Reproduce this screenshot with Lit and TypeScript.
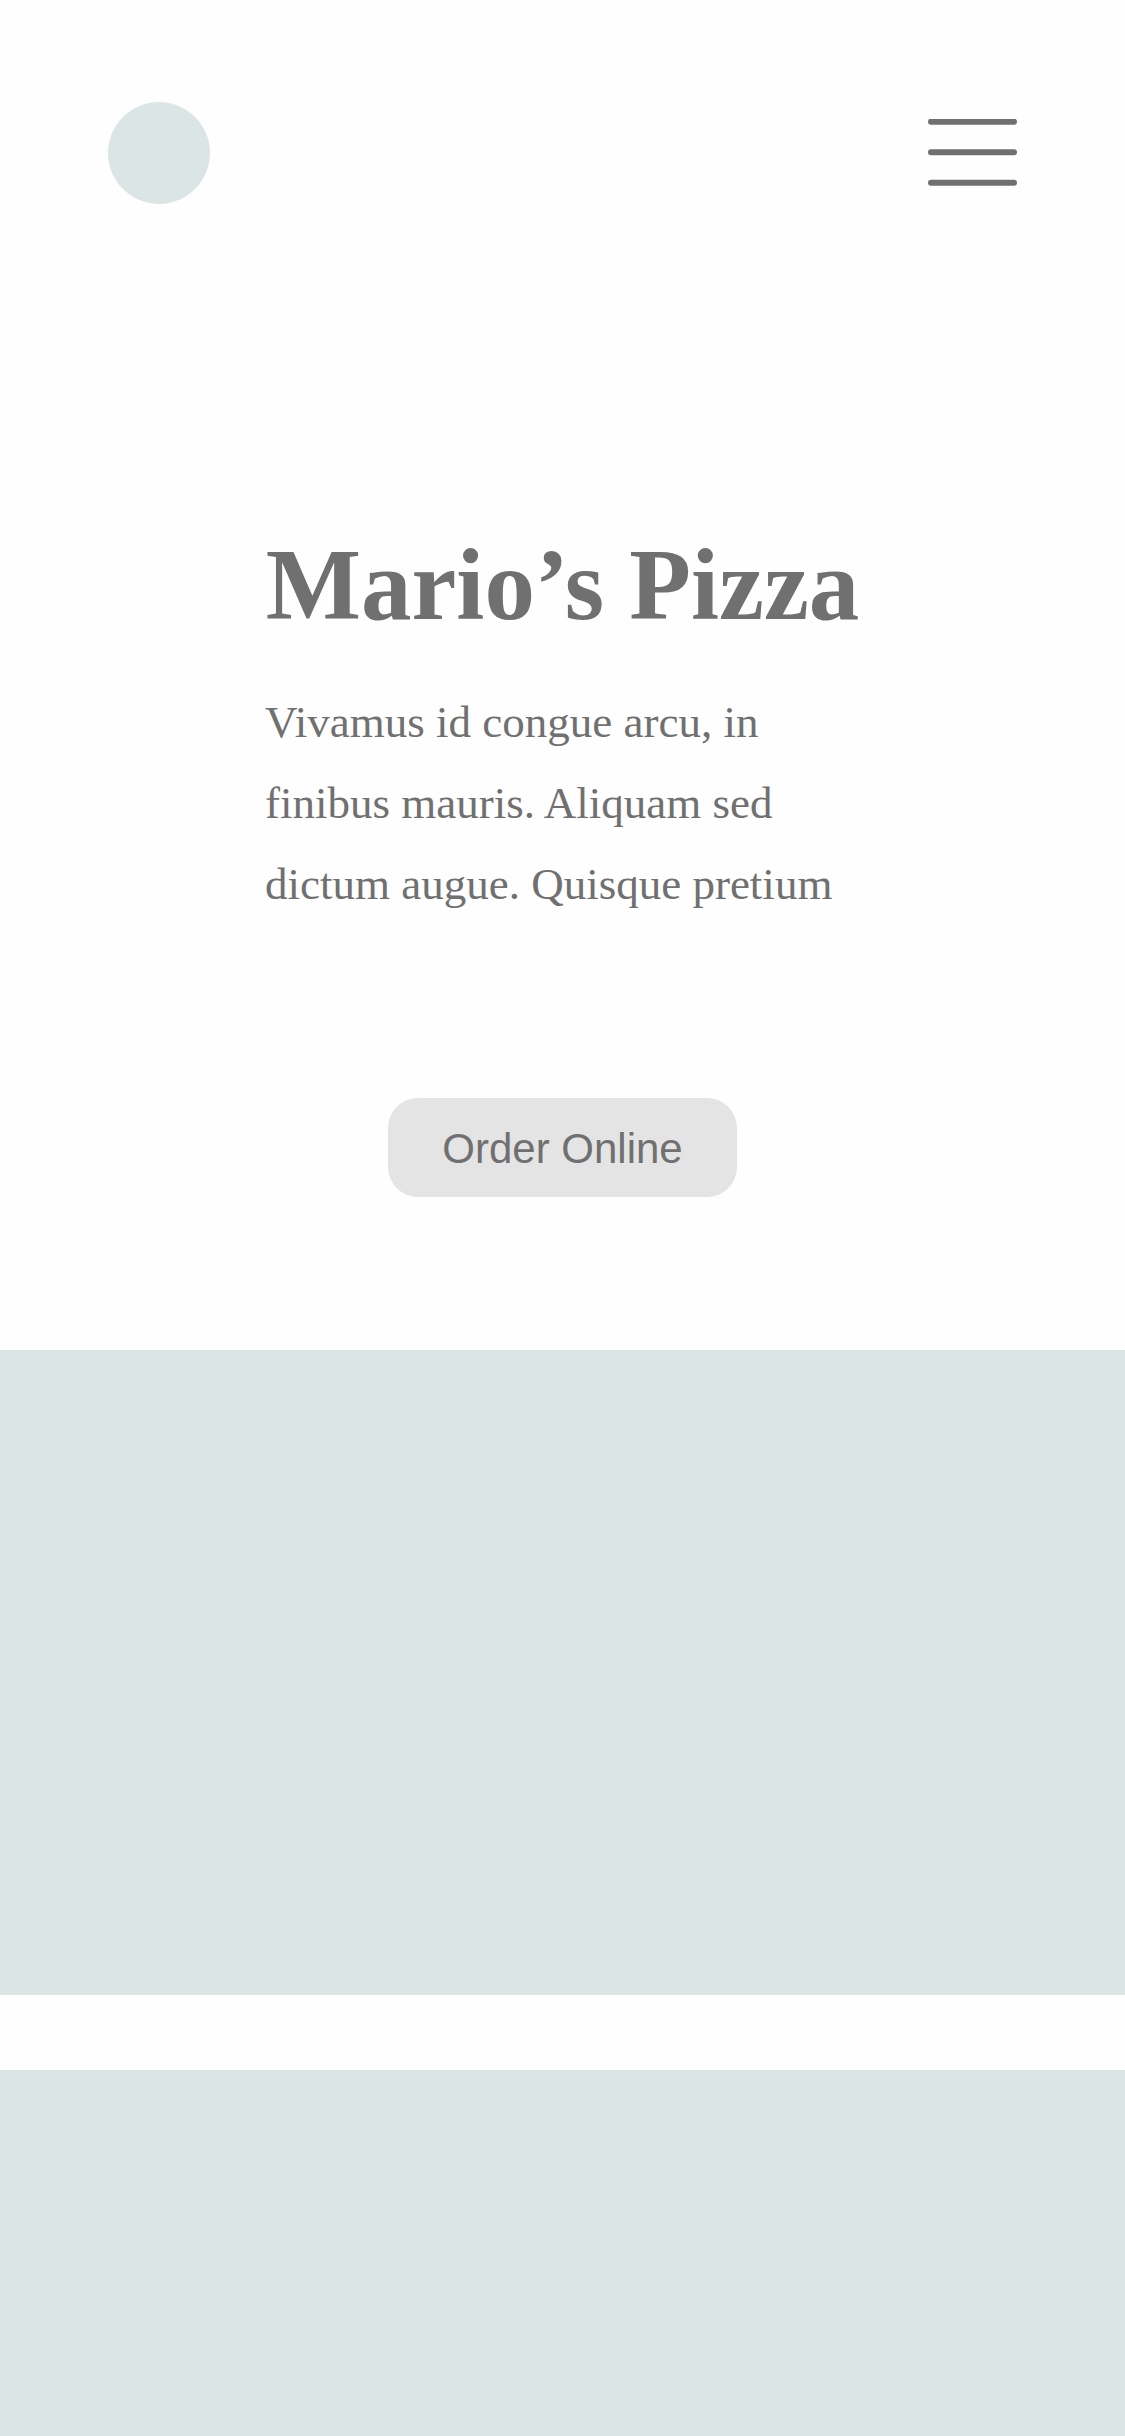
import { LitElement, html, css } from "lit";
import { customElement, property } from "lit/decorators.js";

@customElement("site-header")
class SiteHeader extends LitElement {
  static styles = css`
    :host {
      display: block;
    }
    .bar {
      display: flex;
      justify-content: space-between;
      align-items: center;
      padding: 102px 108px 0;
    }
    .logo {
      display: block;
      width: 102px;
      height: 102px;
      border-radius: 50%;
      background: #dbe5e5;
    }
    .menu {
      display: block;
      padding: 0;
      border: 0;
      background: none;
      color: #707070;
      cursor: pointer;
    }
    .icon {
      display: block;
      width: 89px;
      height: 68px;
    }
  `;

  render() {
    return html`
      <header class="bar">
        <a class="logo" href="#" aria-label="Home"></a>
        <button class="menu" type="button" aria-label="Menu">
          <svg class="icon" viewBox="0 0 89 68" fill="none" stroke="currentColor"
            stroke-width="6" stroke-linecap="round" aria-hidden="true">
            <path d="M3 2.7H86M3 33.2H86M3 63.7H86" />
          </svg>
        </button>
      </header>
    `;
  }
}

@customElement("site-hero")
class SiteHero extends LitElement {
  @property() heading = "";
  @property() action = "";

  static styles = css`
    :host {
      display: block;
    }
    .hero {
      display: flex;
      flex-direction: column;
      align-items: center;
      padding: 324px 48px 153px;
      color: #707070;
    }
    .copy {
      width: 100%;
      max-width: 595px;
    }
    .title {
      margin: 0;
      font: bold 101px/114px "Liberation Serif", serif;
      text-align: center;
      white-space: nowrap;
    }
    .text {
      margin: 40px 0 0;
      font: 45px/81px "Liberation Serif", serif;
    }
    .order {
      margin-top: 173px;
      padding: 3px 54px 0;
      border: 0;
      border-radius: 30px;
      background: #e4e4e4;
      color: inherit;
      font: 42px/96px "Liberation Sans", sans-serif;
      cursor: pointer;
    }
  `;

  render() {
    return html`
      <section class="hero">
        <div class="copy">
          <h1 class="title">${this.heading}</h1>
          <p class="text"><slot></slot></p>
        </div>
        <button class="order" type="button">${this.action}</button>
      </section>
    `;
  }
}

@customElement("app-root")
class AppRoot extends LitElement {
  static styles = css`
    :host {
      display: block;
      background: #fefefe;
    }
    .page {
      display: flex;
      flex-direction: column;
      min-height: 100vh;
    }
    .panels {
      flex: 1;
      display: flex;
      flex-direction: column;
      gap: 75px;
    }
    .panel {
      background: #dbe5e5;
    }
    .wide {
      aspect-ratio: 75 / 43;
    }
    .rest {
      flex: 1;
    }
  `;

  render() {
    return html`
      <div class="page">
        <site-header></site-header>
        <site-hero heading="Mario’s Pizza" action="Order Online">Vivamus id congue arcu, in finibus mauris. Aliquam sed dictum augue. Quisque pretium</site-hero>
        <main class="panels">
          <div class="panel wide"></div>
          <div class="panel rest"></div>
        </main>
      </div>
    `;
  }
}
